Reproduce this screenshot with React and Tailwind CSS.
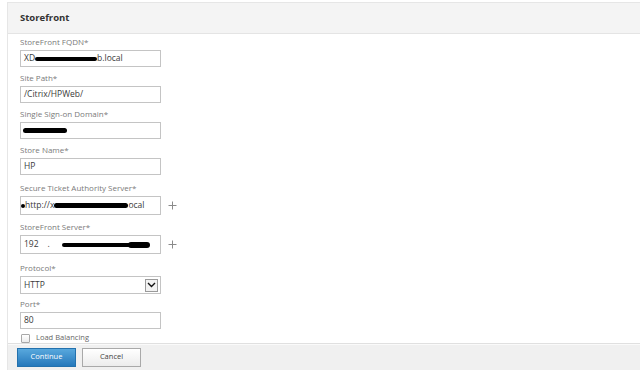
import React from "react";

const font = { fontFamily: '"Open Sans", "Noto Sans", sans-serif' };

function Bar({ w, h = 5, className = "" }) {
  return (
    <span
      className={`inline-block bg-black rounded-full align-middle ${className}`}
      style={{ width: w, height: h }}
    />
  );
}

function Label({ children }) {
  return (
    <div className="h-[12px] leading-[12px] text-[8px] text-[#7a7a7a] whitespace-nowrap">
      {children}
    </div>
  );
}

function Input({ children, h = "h-[17px]" }) {
  return (
    <div
      className={`${h} w-[141px] border border-[#c4c4c4] bg-white flex items-center pl-[3px] text-[8.5px] text-[#3a3a3a] whitespace-nowrap overflow-hidden`}
    >
      {children}
    </div>
  );
}

function Plus() {
  return (
    <svg width="9" height="9" viewBox="0 0 9 9" className="ml-[7px]">
      <path d="M4.5 0.5V8.5M0.5 4.5H8.5" stroke="#8a8a8a" strokeWidth="1" />
    </svg>
  );
}

function Field({ label, mt, children }) {
  return (
    <div style={{ marginTop: mt }}>
      <Label>{label}</Label>
      <div className="mt-[2px] flex items-center">{children}</div>
    </div>
  );
}

export default function App() {
  return (
    <div className="w-[640px] h-[370px] bg-white pl-[7px] pt-[2px] overflow-hidden" style={font}>
      <div className="h-full flex flex-col border-l border-t border-[#e6e6e6]">
        <div className="h-[31px] shrink-0 bg-[#f4f4f4] border-b border-[#e4e4e4] flex items-center pl-[12px]">
          <span className="text-[9.5px] font-bold text-[#333]">Storefront</span>
        </div>
        <div className="flex-1 pl-[12px] pt-[2px] overflow-hidden">
          <Field label="StoreFront FQDN*" mt={0}>
            <Input>
              <span>XD</span>
              <Bar w={62} h={4} />
              <span>b.local</span>
            </Input>
          </Field>
          <Field label="Site Path*" mt={5}>
            <Input>/Citrix/HPWeb/</Input>
          </Field>
          <Field label="Single Sign-on Domain*" mt={5}>
            <Input>
              <Bar w={44} h={5} className="-ml-[1px]" />
            </Input>
          </Field>
          <Field label="Store Name*" mt={5}>
            <Input>HP</Input>
          </Field>
          <Field label="Secure Ticket Authority Server*" mt={7}>
            <Input h="h-[19px]">
              <span className="-ml-[3px] inline-block w-[4px] h-[4px] bg-black rounded-full" />
              <span>http://x</span>
              <Bar w={74} h={5} />
              <span>ocal</span>
            </Input>
            <Plus />
          </Field>
          <Field label="StoreFront Server*" mt={6}>
            <Input h="h-[19px]">
              <span>192</span>
              <span className="ml-[9px]">.</span>
              <Bar w={70} h={4} className="ml-[12px]" />
              <Bar w={22} h={6} className="-ml-[4px]" />
            </Input>
            <Plus />
          </Field>
          <Field label="Protocol*" mt={8}>
            <div className="h-[18px] w-[141px] border border-[#c4c4c4] bg-white flex items-center justify-between pl-[3px] pr-[2px] text-[8.5px] text-[#3a3a3a]">
              <span>HTTP</span>
              <span className="w-[13px] h-[13px] border border-[#9a9a9a] bg-[#f2f2f2] flex items-center justify-center">
                <svg width="9" height="6" viewBox="0 0 9 6">
                  <path d="M1 1L4.5 4.5L8 1" stroke="#111" strokeWidth="1.4" fill="none" />
                </svg>
              </span>
            </div>
          </Field>
          <Field label="Port*" mt={4}>
            <Input>80</Input>
          </Field>
          <div className="mt-[4px] h-[10px] flex items-center">
            <span className="ml-[1px] w-[9px] h-[9px] border border-[#a8a8a8] rounded-[1px] bg-gradient-to-b from-white to-[#ececec]" />
            <span className="ml-[6px] text-[7.5px] text-[#666]">Load Balancing</span>
          </div>
        </div>
        <div className="h-[27px] shrink-0 bg-[#f0f0f0] border-t border-[#e0e0e0] shadow-[inset_0_1px_0_#fafafa] flex items-center pl-[9px] gap-[6px]">
          <button className="w-[59px] h-[19px] border border-[#2371ad] bg-gradient-to-b from-[#58a8dd] to-[#2478bb] text-white text-[7.5px] flex items-center justify-center">
            Continue
          </button>
          <button className="w-[59px] h-[19px] border border-[#a9a9a9] bg-gradient-to-b from-white to-[#ececec] text-[#444] text-[7.5px] flex items-center justify-center">
            Cancel
          </button>
        </div>
      </div>
    </div>
  );
}
